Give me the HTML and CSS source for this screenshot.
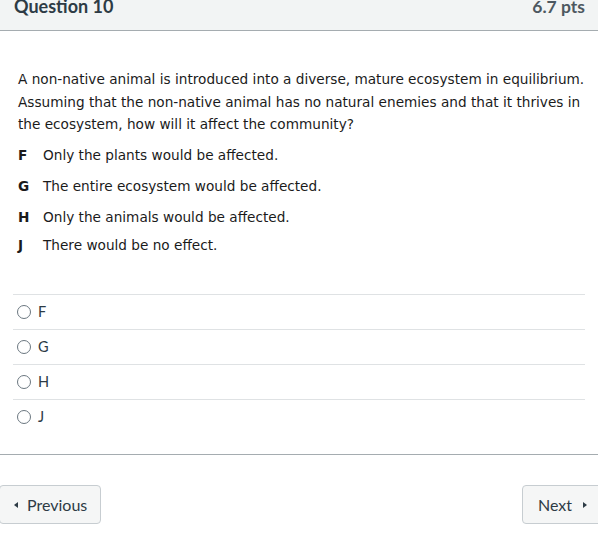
FILE: index.html
```html
<!DOCTYPE html>
<html>
<head>
<meta charset="utf-8">
<link rel="stylesheet" href="styles.css">
</head>
<body>
<div class="page">
  <div class="q-header">
    <span class="q-title">Question 10</span>
    <span class="q-pts">6.7 pts</span>
  </div>
  <div class="q-body">
    <p class="q-text">A non-native animal is introduced into a diverse, mature ecosystem in equilibrium. Assuming that the non-native animal has no natural enemies and that it thrives in the ecosystem, how will it affect the community?</p>
    <div class="choices">
      <div class="choice c1"><b>F</b><span>Only the plants would be affected.</span></div>
      <div class="choice c2"><b>G</b><span>The entire ecosystem would be affected.</span></div>
      <div class="choice c3"><b>H</b><span>Only the animals would be affected.</span></div>
      <div class="choice c4"><b>J</b><span>There would be no effect.</span></div>
    </div>
    <div class="answers">
      <label class="answer"><span class="radio"></span><span class="lbl">F</span></label>
      <label class="answer"><span class="radio"></span><span class="lbl">G</span></label>
      <label class="answer"><span class="radio"></span><span class="lbl">H</span></label>
      <label class="answer"><span class="radio"></span><span class="lbl">J</span></label>
    </div>
  </div>
  <div class="nav">
    <button class="btn prev"><span class="tri tri-left"></span>Previous</button>
    <button class="btn next">Next<span class="tri tri-right"></span></button>
  </div>
</div>
</body>
</html>
```

FILE: styles.css
```css
html, body {
  margin: 0;
  padding: 0;
  background: #fff;
}
.page {
  width: 598px;
  height: 533px;
  overflow: hidden;
}
.q-header {
  height: 31px;
  box-sizing: border-box;
  background: #f2f4f4;
  border-bottom: 1px solid #a5acb0;
  display: flex;
  justify-content: space-between;
  align-items: flex-start;
  padding: 0 13px 0 14px;
  font-family: Lato, sans-serif;
  font-weight: 700;
  font-size: 18px;
  line-height: 13px;
}
.q-title { color: #2d3b45; }
.q-pts { color: #4d5860; font-size: 17.5px; }
.q-body {
  padding: 0 13px;
  height: 424px;
  box-sizing: border-box;
  border-bottom: 1px solid #a5acb0;
}
.q-text {
  margin: 0;
  padding: 37px 0 0 5px;
  font-family: Verdana, "DejaVu Sans", sans-serif;
  font-size: 13.65px;
  line-height: 22.5px;
  color: #1b1b1b;
}
.choices {
  padding: 10px 5px 0 5px;
  font-family: Verdana, "DejaVu Sans", sans-serif;
  font-size: 13.65px;
  color: #1b1b1b;
  display: flex;
  flex-direction: column;
}
.choice {
  display: flex;
  height: 31px;
  line-height: 18px;
}
.choice.c3, .choice.c4 { height: 28px; }
.choice b {
  width: 25px;
  font-weight: 700;
}
.answers {
  margin-top: 30px;
  display: flex;
  flex-direction: column;
}
.answer {
  display: flex;
  align-items: center;
  height: 35px;
  border-top: 1px solid #dfe2e4;
  box-sizing: border-box;
  font-family: Lato, sans-serif;
  font-size: 14.5px;
  color: #2d3b45;
}
.radio {
  width: 12px;
  height: 12px;
  border: 1px solid #6b7780;
  border-radius: 50%;
  margin: 0 7px 0 4px;
  box-sizing: content-box;
}
.nav {
  display: flex;
  justify-content: space-between;
  padding-top: 30px;
}
.btn {
  height: 39px;
  box-sizing: border-box;
  background: #f5f6f6;
  border: 1px solid #c7cdd1;
  border-radius: 4px;
  font-family: Lato, sans-serif;
  font-size: 16px;
  color: #2d3b45;
  display: flex;
  align-items: center;
  padding: 0;
}
.btn.prev {
  width: 102px;
  margin-left: -1px;
  padding-left: 14px;
}
.btn.next {
  width: 80px;
  margin-right: -4px;
  padding-left: 15px;
}
.tri {
  display: inline-block;
  width: 0;
  height: 0;
  border-top: 3.5px solid transparent;
  border-bottom: 3.5px solid transparent;
}
.tri-left {
  border-right: 4px solid #2d3b45;
  margin-right: 9px;
}
.tri-right {
  border-left: 4px solid #2d3b45;
  margin-left: 11px;
}
```
